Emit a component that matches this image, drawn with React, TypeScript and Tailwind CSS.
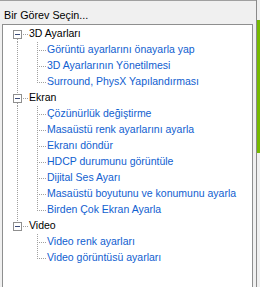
import React from "react";

type Group = { title: string; children: string[] };

const groups: Group[] = [
  {
    title: "3D Ayarları",
    children: [
      "Görüntü ayarlarını önayarla yap",
      "3D Ayarlarının Yönetilmesi",
      "Surround, PhysX Yapılandırması",
    ],
  },
  {
    title: "Ekran",
    children: [
      "Çözünürlük değiştirme",
      "Masaüstü renk ayarlarını ayarla",
      "Ekranı döndür",
      "HDCP durumunu görüntüle",
      "Dijital Ses Ayarı",
      "Masaüstü boyutunu ve konumunu ayarla",
      "Birden Çok Ekran Ayarla",
    ],
  },
  {
    title: "Video",
    children: ["Video renk ayarları", "Video görüntüsü ayarları"],
  },
];

const LINE = "#a0a0a0";

function Dotted({ x1, y1, x2, y2 }: { x1: number; y1: number; x2: number; y2: number }) {
  return (
    <line
      x1={x1}
      y1={y1}
      x2={x2}
      y2={y2}
      stroke={LINE}
      strokeWidth={1}
      strokeDasharray="1 1"
      shapeRendering="crispEdges"
    />
  );
}

function GroupRow({ title, first, last }: { title: string; first: boolean; last: boolean }) {
  return (
    <div className="flex h-[16px] items-center">
      <svg width={26} height={16} className="shrink-0">
        {!first && <Dotted x1={14.5} y1={0} x2={14.5} y2={4} />}
        {!last && <Dotted x1={14.5} y1={13} x2={14.5} y2={16} />}
        <Dotted x1={20} y1={8.5} x2={26} y2={8.5} />
        <rect
          x={10.5}
          y={4.5}
          width={8}
          height={8}
          fill="#ffffff"
          stroke="#8f8f8f"
          strokeWidth={1}
          shapeRendering="crispEdges"
        />
        <line x1={12} y1={8.5} x2={17} y2={8.5} stroke="#3a4a78" strokeWidth={1} shapeRendering="crispEdges" />
      </svg>
      <span className="whitespace-nowrap text-black">{title}</span>
    </div>
  );
}

function ChildRow({ label, parentLast, last }: { label: string; parentLast: boolean; last: boolean }) {
  return (
    <div className="flex h-[16px] items-center">
      <svg width={44} height={16} className="shrink-0">
        {!parentLast && <Dotted x1={14.5} y1={0} x2={14.5} y2={16} />}
        <Dotted x1={34.5} y1={0} x2={34.5} y2={last ? 9 : 16} />
        <Dotted x1={36} y1={8.5} x2={44} y2={8.5} />
      </svg>
      <span className="whitespace-nowrap text-[#1060d0]">{label}</span>
    </div>
  );
}

export default function App() {
  return (
    <div
      className="flex h-[287px] w-[260px] overflow-hidden bg-[#f0f0f0] text-[10.5px]"
      style={{ fontFamily: '"Liberation Sans", Arial, sans-serif' }}
    >
      <div className="flex w-[256px] flex-col border-t border-[#a0a0a0]">
        <div className="h-[23px] pl-[4px] pt-[7px] leading-[14px] text-[10.75px] text-black">Bir Görev Seçin...</div>
        <div className="ml-[2px] w-[251px] flex-1 border border-b-0 border-[#8e8f8f] bg-white pt-[1px]">
          {groups.map((g, gi) => (
            <React.Fragment key={g.title}>
              <GroupRow title={g.title} first={gi === 0} last={gi === groups.length - 1} />
              {g.children.map((c, ci) => (
                <ChildRow
                  key={c}
                  label={c}
                  parentLast={gi === groups.length - 1}
                  last={ci === g.children.length - 1}
                />
              ))}
            </React.Fragment>
          ))}
        </div>
      </div>
      <div className="w-[1px] bg-[#8a8a8a]" />
      <div className="flex w-[3px] flex-col pt-[20px]">
        <div className="h-[133px] bg-[#76b900]" />
      </div>
    </div>
  );
}
